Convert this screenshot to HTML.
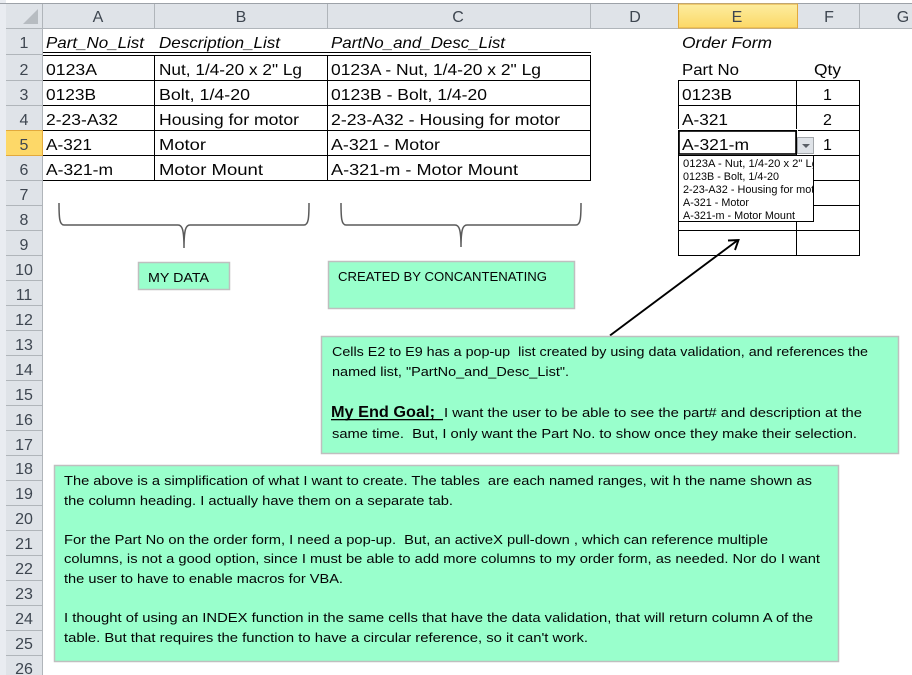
<!DOCTYPE html>
<html><head><meta charset="utf-8"><style>
html,body{margin:0;padding:0;background:#fff;width:912px;height:675px;overflow:hidden}
svg{display:block}
text{font-family:"Liberation Sans",sans-serif;fill:#050505}
.c{font-size:16px}
.i{font-size:16px;font-style:italic}
.h{font-size:16px;fill:#3e4650;text-anchor:middle}
.d{font-size:11px}
.b{font-size:13px;white-space:pre}
</style></head><body>
<svg width="912" height="675" viewBox="0 0 912 675" xmlns="http://www.w3.org/2000/svg">
<defs>
<linearGradient id="e" x1="0" y1="0" x2="0" y2="1"><stop offset="0" stop-color="#fdeda0"/><stop offset="1" stop-color="#fcd866"/></linearGradient>
<clipPath id="dd"><rect x="679" y="156" width="134" height="65"/></clipPath>
</defs>
<rect width="912" height="675" fill="#fff"/>
<rect x="0" y="0" width="6" height="675" fill="#e9ecf1"/>
<rect x="6" y="4" width="906" height="24" fill="#dfe3e8"/>
<rect x="6" y="28" width="37" height="647" fill="#dfe3e8"/>
<rect x="0" y="3" width="912" height="1" fill="#9da2a8"/>
<polygon points="38,9 38,24 23,24" fill="#b7bcc1"/>
<g fill="#b0b5ba">
<rect x="42" y="4" width="1" height="671"/><rect x="6" y="28" width="906" height="1"/>
<rect x="154" y="4" width="1" height="24"/><rect x="327" y="4" width="1" height="24"/><rect x="590" y="4" width="1" height="24"/><rect x="859" y="4" width="1" height="24"/>
<rect x="6" y="54" width="37" height="1"/><rect x="6" y="80" width="37" height="1"/><rect x="6" y="105" width="37" height="1"/><rect x="6" y="180" width="37" height="1"/><rect x="6" y="205" width="37" height="1"/><rect x="6" y="230" width="37" height="1"/><rect x="6" y="255" width="37" height="1"/><rect x="6" y="280" width="37" height="1"/><rect x="6" y="305" width="37" height="1"/><rect x="6" y="330" width="37" height="1"/><rect x="6" y="355" width="37" height="1"/><rect x="6" y="380" width="37" height="1"/><rect x="6" y="405" width="37" height="1"/><rect x="6" y="430" width="37" height="1"/><rect x="6" y="455" width="37" height="1"/><rect x="6" y="480" width="37" height="1"/><rect x="6" y="505" width="37" height="1"/><rect x="6" y="530" width="37" height="1"/><rect x="6" y="555" width="37" height="1"/><rect x="6" y="580" width="37" height="1"/><rect x="6" y="605" width="37" height="1"/><rect x="6" y="630" width="37" height="1"/><rect x="6" y="655" width="37" height="1"/>
</g>
<rect x="678.5" y="4" width="119" height="24" fill="url(#e)" stroke="#e2a93c"/>
<rect x="6" y="130" width="37" height="25" fill="#fdd868"/><rect x="42" y="130" width="1" height="25" fill="#e2a93c"/><rect x="6" y="130" width="37" height="1" fill="#e2a93c"/><rect x="6" y="155" width="37" height="1" fill="#e2a93c"/>

<text class="h" x="98" y="22">A</text><text class="h" x="241" y="22">B</text><text class="h" x="458" y="22">C</text><text class="h" x="635" y="22">D</text><text class="h" x="737" y="22">E</text><text class="h" x="829" y="22">F</text><text class="h" x="903" y="22">G</text>
<text class="h" x="24" y="48">1</text><text class="h" x="24" y="75">2</text><text class="h" x="24" y="100">3</text><text class="h" x="24" y="125">4</text><text class="h" x="24" y="150">5</text><text class="h" x="24" y="175">6</text><text class="h" x="24" y="200">7</text><text class="h" x="24" y="225">8</text><text class="h" x="24" y="250">9</text><text class="h" x="24" y="275">10</text><text class="h" x="24" y="300">11</text><text class="h" x="24" y="325">12</text><text class="h" x="24" y="350">13</text><text class="h" x="24" y="375">14</text><text class="h" x="24" y="400">15</text><text class="h" x="24" y="425">16</text><text class="h" x="24" y="450">17</text><text class="h" x="24" y="474">18</text><text class="h" x="24" y="499">19</text><text class="h" x="24" y="524">20</text><text class="h" x="24" y="549">21</text><text class="h" x="24" y="574">22</text><text class="h" x="24" y="599">23</text><text class="h" x="24" y="624">24</text><text class="h" x="24" y="649">25</text><text class="h" x="24" y="674">26</text>

<g fill="#000">
<rect x="43" y="52" width="548" height="1"/><rect x="43" y="55" width="548" height="1"/>
<rect x="43" y="80" width="548" height="1"/><rect x="43" y="105" width="548" height="1"/><rect x="43" y="130" width="548" height="1"/><rect x="43" y="155" width="548" height="1"/><rect x="43" y="180" width="548" height="1"/>
<rect x="154" y="55" width="1" height="126"/><rect x="327" y="55" width="1" height="126"/><rect x="590" y="55" width="1" height="126"/>
<rect x="678" y="80" width="182" height="1"/><rect x="678" y="105" width="182" height="1"/><rect x="678" y="130" width="182" height="1"/><rect x="678" y="155" width="182" height="1"/><rect x="678" y="180" width="182" height="1"/><rect x="678" y="205" width="182" height="1"/><rect x="678" y="230" width="182" height="1"/><rect x="678" y="255" width="182" height="1"/>
<rect x="678" y="80" width="1" height="176"/><rect x="796" y="80" width="1" height="176"/><rect x="859" y="80" width="1" height="176"/>
</g>

<text class="i" x="46" y="48" textLength="98" lengthAdjust="spacingAndGlyphs">Part_No_List</text>
<text class="i" x="159" y="48" textLength="121" lengthAdjust="spacingAndGlyphs">Description_List</text>
<text class="i" x="331" y="48" textLength="174" lengthAdjust="spacingAndGlyphs">PartNo_and_Desc_List</text>
<text class="i" x="682" y="48" textLength="90" lengthAdjust="spacingAndGlyphs">Order Form</text>
<text class="c" x="682" y="75" textLength="57" lengthAdjust="spacingAndGlyphs">Part No</text>
<text class="c" x="814" y="75" textLength="27" lengthAdjust="spacingAndGlyphs">Qty</text>

<text class="c" x="46" y="75" textLength="51" lengthAdjust="spacingAndGlyphs">0123A</text>
<text class="c" x="46" y="100" textLength="50" lengthAdjust="spacingAndGlyphs">0123B</text>
<text class="c" x="46" y="125" textLength="72" lengthAdjust="spacingAndGlyphs">2-23-A32</text>
<text class="c" x="46" y="150" textLength="46" lengthAdjust="spacingAndGlyphs">A-321</text>
<text class="c" x="46" y="175" textLength="67" lengthAdjust="spacingAndGlyphs">A-321-m</text>

<text class="c" x="159" y="75" textLength="143" lengthAdjust="spacingAndGlyphs">Nut, 1/4-20 x 2" Lg</text>
<text class="c" x="159" y="100" textLength="91" lengthAdjust="spacingAndGlyphs">Bolt, 1/4-20</text>
<text class="c" x="159" y="125" textLength="140" lengthAdjust="spacingAndGlyphs">Housing for motor</text>
<text class="c" x="159" y="150" textLength="47" lengthAdjust="spacingAndGlyphs">Motor</text>
<text class="c" x="159" y="175" textLength="104" lengthAdjust="spacingAndGlyphs">Motor Mount</text>

<text class="c" x="331" y="75" textLength="210" lengthAdjust="spacingAndGlyphs">0123A - Nut, 1/4-20 x 2" Lg</text>
<text class="c" x="331" y="100" textLength="156" lengthAdjust="spacingAndGlyphs">0123B - Bolt, 1/4-20</text>
<text class="c" x="331" y="125" textLength="229" lengthAdjust="spacingAndGlyphs">2-23-A32 - Housing for motor</text>
<text class="c" x="331" y="150" textLength="109" lengthAdjust="spacingAndGlyphs">A-321 - Motor</text>
<text class="c" x="331" y="175" textLength="187" lengthAdjust="spacingAndGlyphs">A-321-m - Motor Mount</text>

<text class="c" x="682" y="100" textLength="50" lengthAdjust="spacingAndGlyphs">0123B</text>
<text class="c" x="682" y="125" textLength="46" lengthAdjust="spacingAndGlyphs">A-321</text>
<text class="c" x="682" y="150" textLength="67" lengthAdjust="spacingAndGlyphs">A-321-m</text>
<text class="c" x="823" y="100">1</text><text class="c" x="823" y="125">2</text><text class="c" x="823" y="150">1</text>

<rect x="677.5" y="129.5" width="120" height="26" fill="none" stroke="#fff"/>
<rect x="679" y="131" width="117" height="23" fill="none" stroke="#000" stroke-width="1.6"/>
<rect x="797.5" y="137.5" width="16" height="16" fill="#dfe3e8" stroke="#a2a6aa"/>
<polygon points="802,144 810,144 806,148" fill="#5a5f66"/>

<rect x="678.5" y="155.5" width="135" height="66" fill="#fff" stroke="#000"/>
<g clip-path="url(#dd)">
<text class="d" x="683" y="167" textLength="135" lengthAdjust="spacingAndGlyphs">0123A - Nut, 1/4-20 x 2" Lg</text>
<text class="d" x="683" y="180" textLength="96" lengthAdjust="spacingAndGlyphs">0123B - Bolt, 1/4-20</text>
<text class="d" x="683" y="193" textLength="141" lengthAdjust="spacingAndGlyphs">2-23-A32 - Housing for motor</text>
<text class="d" x="683" y="206" textLength="66" lengthAdjust="spacingAndGlyphs">A-321 - Motor</text>
<text class="d" x="683" y="219" textLength="112" lengthAdjust="spacingAndGlyphs">A-321-m - Motor Mount</text>
</g>

<path d="M59 203C59 218 59.5 225 64 225L178 225C182 225 184 229 184 248C184 229 186 225 190 225L304 225C308.5 225 309 218 309 203" fill="none" stroke="#5a5a5a" stroke-width="1.5"/>
<path d="M341 203C341 218 341.5 225 346 225L455 225C459 225 461 229 461 247C461 229 463 225 467 225L576 225C580.5 225 581 218 581 203" fill="none" stroke="#5a5a5a" stroke-width="1.5"/>

<path d="M610 335.5L738 240M728 240.5L738.5 240L735 250" fill="none" stroke="#000" stroke-width="1.9"/>

<g fill="#99ffcc" stroke="#bfbfbf" stroke-width="1.5">
<rect x="138.5" y="262.5" width="91" height="27"/>
<rect x="328.5" y="261.5" width="246" height="47"/>
<rect x="321.5" y="336.5" width="577" height="117"/>
<rect x="54.5" y="465.5" width="784" height="196"/>
</g>

<text class="b" x="148" y="282" textLength="61" lengthAdjust="spacingAndGlyphs">MY DATA</text>
<text class="b" x="338" y="281" textLength="209" lengthAdjust="spacingAndGlyphs">CREATED BY CONCANTENATING</text>

<text class="b" x="332" y="356" textLength="536" lengthAdjust="spacingAndGlyphs">Cells E2 to E9 has a pop-up  list created by using data validation, and references the</text>
<text class="b" x="332" y="376" textLength="237" lengthAdjust="spacingAndGlyphs">named list, "PartNo_and_Desc_List".</text>
<text x="331" y="417" font-size="16" font-weight="bold" textLength="104" lengthAdjust="spacingAndGlyphs">My End Goal;</text>
<rect x="331" y="419" width="112" height="1.3" fill="#000"/>
<text class="b" x="444" y="417" textLength="418" lengthAdjust="spacingAndGlyphs">I want the user to be able to see the part# and description at the</text>
<text class="b" x="332" y="438" textLength="525" lengthAdjust="spacingAndGlyphs">same time.  But, I only want the Part No. to show once they make their selection.</text>

<text class="b" x="64" y="485" textLength="748" lengthAdjust="spacingAndGlyphs">The above is a simplification of what I want to create. The tables  are each named ranges, wit h the name shown as</text>
<text class="b" x="64" y="505" textLength="389" lengthAdjust="spacingAndGlyphs">the column heading. I actually have them on a separate tab.</text>
<text class="b" x="64" y="544" textLength="704" lengthAdjust="spacingAndGlyphs">For the Part No on the order form, I need a pop-up.  But, an activeX pull-down , which can reference multiple</text>
<text class="b" x="64" y="563" textLength="756" lengthAdjust="spacingAndGlyphs">columns, is not a good option, since I must be able to add more columns to my order form, as needed. Nor do I want</text>
<text class="b" x="64" y="583" textLength="279" lengthAdjust="spacingAndGlyphs">the user to have to enable macros for VBA.</text>
<text class="b" x="64" y="622" textLength="749" lengthAdjust="spacingAndGlyphs">I thought of using an INDEX function in the same cells that have the data validation, that will return column A of the</text>
<text class="b" x="64" y="642" textLength="524" lengthAdjust="spacingAndGlyphs">table. But that requires the function to have a circular reference, so it can't work.</text>
</svg>
</body></html>
